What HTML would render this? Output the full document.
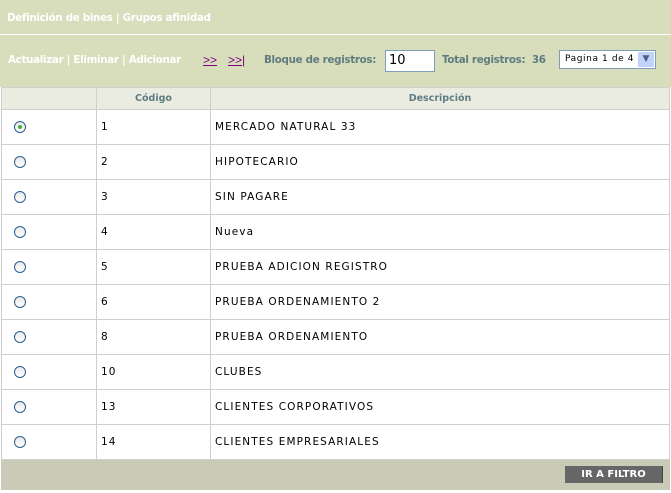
<!DOCTYPE html>
<html><head><meta charset="utf-8"><style>
*{margin:0;padding:0;box-sizing:border-box}
body{width:671px;height:493px;background:#fff;font-family:"DejaVu Sans",Verdana,sans-serif;position:relative;overflow:hidden}
.a{position:absolute}
.hd{left:0;top:0;width:671px;height:34px;background:#d8ddbb;color:#fff;font-weight:bold;font-size:10.3px;padding:12px 0 0 7px;letter-spacing:-0.3px}
.tb{left:0;top:35px;width:671px;height:52px;background:#d8ddbb}
.w{color:#fff;font-weight:bold;font-size:10.3px;letter-spacing:-0.3px}
.g{color:#5f7c80;font-weight:bold;font-size:10.3px;letter-spacing:-0.3px}
table{position:absolute;left:1px;top:87px;border-collapse:collapse;width:669px}
td,th{border:1px solid #cfcfcf;font-size:10px}
th{background:#eaece2;height:22px;color:#5f7c80;font-size:9.5px}
td{height:35px;color:#000;padding-left:4px;font-size:10.5px;letter-spacing:1.1px}
.r{width:12px;height:12px;border-radius:50%;border:1px solid #2a5f91;background:linear-gradient(#e8e8e8,#fff);display:inline-block;margin-left:8px;vertical-align:middle;position:relative}
.r.on::after{content:"";position:absolute;left:3px;top:3px;width:4px;height:4px;border-radius:50%;background:#3cb33c}
.ft{left:1px;top:460px;width:669px;height:30px;background:#c9cbb6}
.bt{left:565px;top:466px;width:98px;height:17px;background:#666;color:#fff;font-weight:bold;font-size:10px;text-align:center;line-height:17px;border-right:1px solid #444}
</style></head><body>
<div class="a hd">Definición de bines | Grupos afinidad</div>
<div class="a tb"></div>
<div class="a w" style="left:8px;top:54px">Actualizar | Eliminar | Adicionar</div>
<div class="a" style="left:203px;top:53px;color:#800080;font-size:12px;text-decoration:underline;font-family:'Liberation Sans'">&gt;&gt;</div>
<div class="a" style="left:228px;top:53px;color:#800080;font-size:12px;text-decoration:underline;font-family:'Liberation Sans'">&gt;&gt;|</div>
<div class="a g" style="left:264px;top:54px">Bloque de registros:</div>
<div class="a" style="left:385px;top:50px;width:50px;height:22px;border:1px solid #7f9db9;background:#fff;font-size:13px;padding:2px 0 0 3px">10</div>
<div class="a g" style="left:442px;top:54px">Total registros:&nbsp; 36</div>
<div class="a" style="left:559px;top:50px;width:97px;height:19px;border:1px solid #7f9db9;background:#fff;font-size:9px;padding:3px 0 0 5px;letter-spacing:0.6px">Pagina 1 de 4</div>
<div class="a" style="left:638px;top:52px;width:16px;height:15px;background:#c1d3fb;color:#4d6185;font-size:9px;text-align:center;line-height:15px">&#9660;</div>
<table>
<tr><th style="width:95px"></th><th style="width:114px">Código</th><th>Descripción</th></tr>
<tr><td><span class="r on"></span></td><td>1</td><td>MERCADO NATURAL 33</td></tr>
<tr><td><span class="r"></span></td><td>2</td><td>HIPOTECARIO</td></tr>
<tr><td><span class="r"></span></td><td>3</td><td>SIN PAGARE</td></tr>
<tr><td><span class="r"></span></td><td>4</td><td>Nueva</td></tr>
<tr><td><span class="r"></span></td><td>5</td><td>PRUEBA ADICION REGISTRO</td></tr>
<tr><td><span class="r"></span></td><td>6</td><td>PRUEBA ORDENAMIENTO 2</td></tr>
<tr><td><span class="r"></span></td><td>8</td><td>PRUEBA ORDENAMIENTO</td></tr>
<tr><td><span class="r"></span></td><td>10</td><td>CLUBES</td></tr>
<tr><td><span class="r"></span></td><td>13</td><td>CLIENTES CORPORATIVOS</td></tr>
<tr><td><span class="r"></span></td><td>14</td><td>CLIENTES EMPRESARIALES</td></tr>
</table>
<div class="a ft"></div>
<div class="a bt">IR A FILTRO</div>
</body></html>
